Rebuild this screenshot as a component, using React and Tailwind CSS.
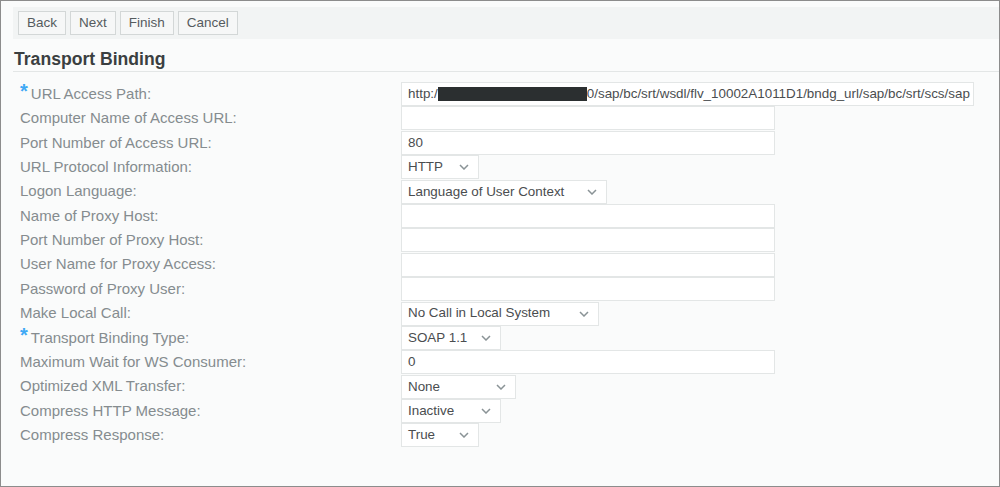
import React from 'react';

const Chevron = () => (
  <svg width="10" height="6" viewBox="0 0 10 6" className="shrink-0">
    <path d="M1 1 L5 5 L9 1" fill="none" stroke="#8a9396" strokeWidth="1.5" />
  </svg>
);

const TextField = ({ value, wide }) => (
  <div className={`h-[24px] ${wide ? 'w-[573px]' : 'w-[374px]'} bg-white border border-[#e3e6e6] px-[6px] flex items-center text-[13.4px] text-[#4a4d4f] whitespace-nowrap overflow-hidden`}>
    {value}
  </div>
);

const Select = ({ value, width }) => (
  <div className={`h-[24px] ${width} bg-white border border-[#e3e6e6] pl-[6px] pr-[9px] flex items-center justify-between text-[13.4px] text-[#4a4d4f] whitespace-nowrap`}>
    <span>{value}</span>
    <Chevron />
  </div>
);

const rows = [
  { label: 'URL Access Path:', req: true, field: 'url' },
  { label: 'Computer Name of Access URL:', field: 'text', value: '' },
  { label: 'Port Number of Access URL:', field: 'text', value: '80' },
  { label: 'URL Protocol Information:', field: 'select', value: 'HTTP', width: 'w-[78px]' },
  { label: 'Logon Language:', field: 'select', value: 'Language of User Context', width: 'w-[206px]' },
  { label: 'Name of Proxy Host:', field: 'text', value: '' },
  { label: 'Port Number of Proxy Host:', field: 'text', value: '' },
  { label: 'User Name for Proxy Access:', field: 'text', value: '' },
  { label: 'Password of Proxy User:', field: 'text', value: '' },
  { label: 'Make Local Call:', field: 'select', value: 'No Call in Local System', width: 'w-[198px]' },
  { label: 'Transport Binding Type:', req: true, field: 'select', value: 'SOAP 1.1', width: 'w-[100px]' },
  { label: 'Maximum Wait for WS Consumer:', field: 'text', value: '0' },
  { label: 'Optimized XML Transfer:', field: 'select', value: 'None', width: 'w-[115px]' },
  { label: 'Compress HTTP Message:', field: 'select', value: 'Inactive', width: 'w-[100px]' },
  { label: 'Compress Response:', field: 'select', value: 'True', width: 'w-[78px]' },
];

const App = () => {
  return (
    <div
      className="w-[1000px] h-[487px] bg-[#fafbfb] border border-[#8c8c8c] overflow-hidden"
      style={{ fontFamily: '"Liberation Sans", Arial, sans-serif' }}
    >
      <div className="ml-[12px] mt-[6px] h-[32px] bg-[#f2f4f4] flex items-center gap-[4px] pl-[5px]">
        {['Back', 'Next', 'Finish', 'Cancel'].map((b) => (
          <div
            key={b}
            className="h-[24px] px-[8px] flex items-center border border-[#d3d7d7] bg-[#f6f7f7] text-[13.5px] text-[#555b5e]"
          >
            {b}
          </div>
        ))}
      </div>
      <div className="ml-[12px] mt-[10px] pb-[2px] pl-[1px] border-b border-[#e3e6e6] text-[17.6px] leading-[20px] font-bold text-[#3a3f41]">
        Transport Binding
      </div>
      <div className="mt-[10px] flex flex-col">
        {rows.map((r) => (
          <div key={r.label} className="h-[24.4px] flex items-start">
            <div className="w-[400px] h-[24px] pl-[19px] text-[15px] text-[#858c8f] flex items-center">
              {r.req && (
                <span className="text-[#3fa9f5] text-[20px] font-bold leading-[14px] mr-[3px] -mt-[6px]">*</span>
              )}
              <span>{r.label}</span>
            </div>
            {r.field === 'url' && (
              <TextField
                wide
                value={
                  <span className="flex items-center">
                    http:/
                    <span className="inline-block w-[149px] h-[14px] bg-[#2b2f30]" />
                    0/sap/bc/srt/wsdl/flv_10002A1011D1/bndg_url/sap/bc/srt/scs/sap
                  </span>
                }
              />
            )}
            {r.field === 'text' && <TextField value={r.value} />}
            {r.field === 'select' && <Select value={r.value} width={r.width} />}
          </div>
        ))}
      </div>
    </div>
  );
};

export default App;
